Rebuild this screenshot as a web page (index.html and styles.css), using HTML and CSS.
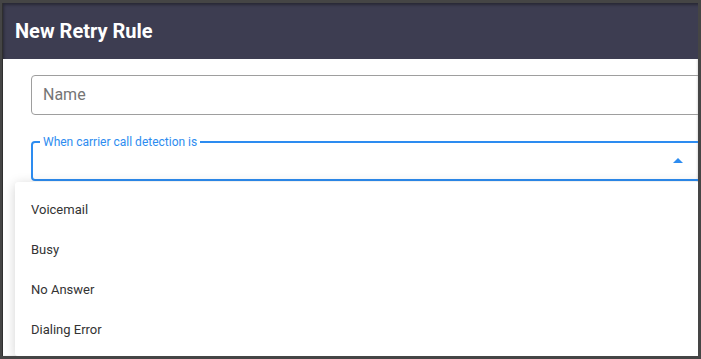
FILE: index.html
```html
<!DOCTYPE html>
<html lang="en">
<head>
<meta charset="utf-8">
<title>New Retry Rule</title>
<link rel="stylesheet" href="styles.css">
</head>
<body>
  <div class="dialog">
    <header class="dialog-header">
      <h1 class="dialog-title">New Retry Rule</h1>
    </header>
    <div class="dialog-body">
      <div class="text-field">
        <span class="placeholder">Name</span>
      </div>
      <div class="select-wrap">
        <div class="select-field">
          <span class="select-label">When carrier call detection is</span>
          <span class="select-arrow"></span>
        </div>
        <ul class="menu">
          <li class="menu-item">Voicemail</li>
          <li class="menu-item">Busy</li>
          <li class="menu-item">No Answer</li>
          <li class="menu-item">Dialing Error</li>
        </ul>
      </div>
    </div>
  </div>
</body>
</html>
```

FILE: styles.css
```css
* { box-sizing: border-box; }

html, body {
  margin: 0;
  height: 100%;
}

body {
  background: #454545;
  padding: 3px;
  font-family: Roboto, "Liberation Sans", sans-serif;
  overflow: hidden;
}

.dialog {
  width: 695px;
  height: 353px;
  background: #fff;
  display: flex;
  flex-direction: column;
  overflow: hidden;
  box-shadow: -1px 0 0 #2f2f2f, inset -1px 0 2px rgba(0,0,0,0.12);
}

.dialog-header {
  height: 56px;
  flex: none;
  background: #3d3d51;
  display: flex;
  align-items: center;
  padding-left: 12px;
  box-shadow: inset 2px 3px 3px -1px rgba(0,0,0,0.35);
}

.dialog-title {
  margin: 0;
  color: #fff;
  font-size: 20px;
  font-weight: 700;
  line-height: 24px;
}

.dialog-body {
  padding: 16px 0 0 28px;
  display: flex;
  flex-direction: column;
  gap: 26px;
}

.text-field {
  width: 676px;
  height: 40px;
  border: 1px solid #9e9e9e;
  border-radius: 4px;
  display: flex;
  align-items: center;
  padding-left: 11px;
}

.placeholder {
  font-size: 16px;
  color: #757575;
  margin-top: -1px;
}

.select-wrap {
  position: relative;
  width: 676px;
}

.select-field {
  position: relative;
  height: 40px;
  border: 2px solid #2d8cf0;
  border-radius: 4px;
  display: flex;
  align-items: center;
  justify-content: flex-end;
  padding-right: 22px;
}

.select-label {
  position: absolute;
  left: 7px;
  top: -8px;
  padding: 0 3px;
  background: #fff;
  color: #2d8cf0;
  font-size: 12px;
  line-height: 14px;
}

.select-arrow {
  width: 0;
  height: 0;
  border-left: 5px solid transparent;
  border-right: 5px solid transparent;
  border-bottom: 5px solid #2d8cf0;
  margin-top: -1px;
}

.menu {
  position: absolute;
  top: calc(100% + 1px);
  left: -16px;
  width: 700px;
  margin: 0;
  padding: 7px 0;
  list-style: none;
  background: #fff;
  box-shadow: 0 2px 12px rgba(0,0,0,0.18);
  border-radius: 3px;
}

.menu-item {
  height: 40px;
  display: flex;
  align-items: center;
  padding-left: 16px;
  font-size: 13px;
  color: #333;
}
```
